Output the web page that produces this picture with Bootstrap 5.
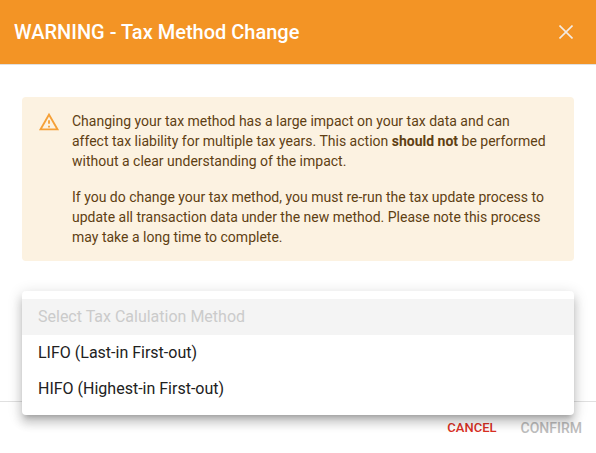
<!DOCTYPE html>
<html lang="en">
<head>
<meta charset="utf-8">
<meta name="viewport" content="width=device-width, initial-scale=1">
<title>Tax Method Change</title>
<link href="https://cdn.jsdelivr.net/npm/bootstrap@5.3.0/dist/css/bootstrap.min.css" rel="stylesheet">
<style>
body { font-family: Roboto, "Liberation Sans", sans-serif; background: #fff; }
.dialog-head { background: #f39425; border-bottom: 1px solid #e0e0e0; padding: 16px 14px; }
.dialog-title { font-size: 20px; line-height: 32px; font-weight: 500; color: #fff; }
.dialog-close { width: 32px; height: 32px; color: #f3ebe4; }
.dialog-main { padding: 32px 22px 54px; }
.notice { background: #fcf2e1; color: #5f3f13; border-radius: 4px; padding: 14px 16px; gap: 12px; font-size: 14px; line-height: 20px; }
.notice-icon { color: #f5a037; }
.method-field { margin-top: 30px; }
.method-toggle { height: 56px; border: 1px solid #c4c4c4; }
.method-menu { top: 0; left: 0; padding: 8px 0; border-radius: 4px; border: 0; height: 124px;
  box-shadow: 0 5px 5px -3px rgba(0,0,0,.2), 0 8px 10px 1px rgba(0,0,0,.14), 0 3px 14px 2px rgba(0,0,0,.12); }
.method-item { font-size: 16px; line-height: 24px; padding: 6px 16px; color: #212121; }
.method-item.disabled { color: #cbcbcb; background: #f4f4f4; }
.dialog-foot { border-top: 1px solid #e0e0e0; padding: 14px 14px 27px; gap: 24px; }
.foot-btn { line-height: 24px; font-weight: 500; }
.foot-cancel { font-size: 13px; color: #d93025; }
.foot-confirm, .foot-confirm:disabled { font-size: 14px; color: #bdbdbd; opacity: 1; }
</style>
<script src="https://cdn.jsdelivr.net/npm/bootstrap@5.3.0/dist/js/bootstrap.bundle.min.js"></script>
</head>
<body>
<div role="dialog" aria-labelledby="dialog-title">
  <header class="dialog-head d-flex align-items-center justify-content-between">
    <h1 class="dialog-title m-0" id="dialog-title">WARNING - Tax Method Change</h1>
    <button type="button" class="dialog-close btn border-0 p-0 d-flex align-items-center justify-content-center" aria-label="Close">
      <svg width="14" height="14" viewBox="0 0 14 14" fill="none" stroke="currentColor" stroke-width="1.6" aria-hidden="true"><path d="M.5.5l13 13M13.5.5l-13 13"/></svg>
    </button>
  </header>
  <main class="dialog-main">
    <div class="notice d-flex" role="alert">
      <svg class="notice-icon flex-shrink-0" width="22" height="22" viewBox="0 0 24 24" fill="currentColor" aria-hidden="true"><path d="M12 5.99L19.53 19H4.47L12 5.99M12 2L1 21h22L12 2zm1 14h-2v2h2v-2zm0-6h-2v4h2v-4z"/></svg>
      <div>
        <p class="mb-3">Changing your tax method has a large impact on your tax data and can<br>affect tax liability for multiple tax years. This action <strong>should not</strong> be performed<br>without a clear understanding of the impact.</p>
        <p class="mb-0">If you do change your tax method, you must re-run the tax update process to<br>update all transaction data under the new method. Please note this process<br>may take a long time to complete.</p>
      </div>
    </div>
    <div class="method-field dropdown">
      <button type="button" class="method-toggle btn w-100" aria-haspopup="true" aria-expanded="true" aria-label="Tax calculation method"></button>
      <div class="method-menu dropdown-menu show w-100">
        <button type="button" class="method-item dropdown-item disabled" disabled>Select Tax Calulation Method</button>
        <button type="button" class="method-item dropdown-item">LIFO (Last-in First-out)</button>
        <button type="button" class="method-item dropdown-item">HIFO (Highest-in First-out)</button>
      </div>
    </div>
  </main>
  <footer class="dialog-foot d-flex justify-content-end align-items-center">
    <button type="button" class="foot-btn foot-cancel btn border-0 p-0">CANCEL</button>
    <button type="button" class="foot-btn foot-confirm btn border-0 p-0" disabled>CONFIRM</button>
  </footer>
</div>
</body>
</html>
